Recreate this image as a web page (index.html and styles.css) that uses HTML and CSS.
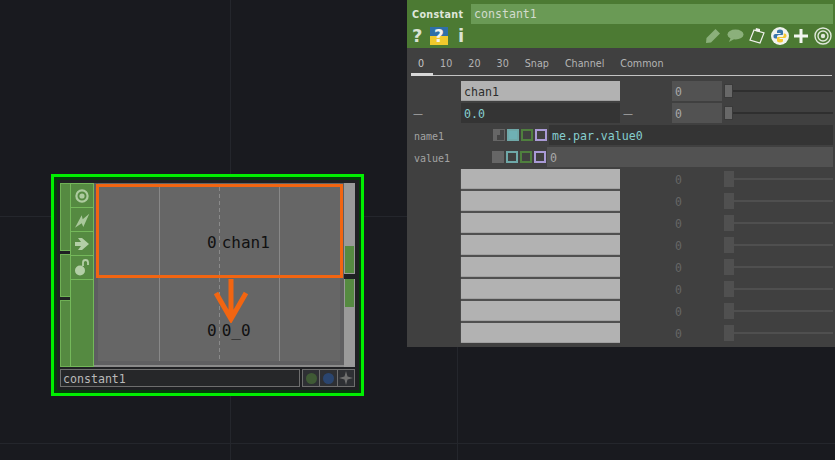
FILE: index.html
```html
<!DOCTYPE html>
<html lang="en">
<head>
<meta charset="utf-8">
<title>Constant CHOP</title>
<link rel="stylesheet" href="styles.css">
</head>
<body>
<main class="canvas">
  <div class="gridline v g1"></div>
  <div class="gridline v g2"></div>
  <div class="gridline h g3"></div>
  <div class="gridline h g4"></div>

  <section class="node">
    <div class="node-inner">
      <div class="node-main">
        <div class="inputs">
          <div class="strip s1"></div>
          <div class="strip s2"></div>
          <div class="strip s3"></div>
        </div>
        <div class="buttons">
          <div class="nbtn"><svg width="16" height="16" viewBox="0 0 16 16"><circle cx="8" cy="8" r="5.6" fill="none" stroke="#adcb9f" stroke-width="2.2"/><circle cx="8" cy="8" r="2.6" fill="#adcb9f"/></svg></div>
          <div class="nbtn"><svg width="18" height="18" viewBox="0 0 18 18"><path d="M16.3 2.7 L9.7 8.3 L8.7 4.3 L2 16.7 L8.7 12.3 L10.3 16 Z" fill="#a9c89b"/></svg></div>
          <div class="nbtn"><svg width="16" height="16" viewBox="0 0 16 16"><path d="M1 6 H7 L4 2 H8 L15 8 L8 14 H4 L7 10 H1 Z" fill="#b3cfa6"/></svg></div>
          <div class="nbtn"><svg width="16" height="18" viewBox="0 0 16 18"><circle cx="6" cy="11.5" r="5" fill="#b3cfa6"/><path d="M9 7 V3.5 A2.4 2.4 0 0 1 14 3.5 V6" fill="none" stroke="#b3cfa6" stroke-width="1.8"/></svg></div>
          <div class="nbtn-rest"></div>
        </div>
        <div class="viewer">
          <div class="vline l1"></div>
          <div class="vline l2"></div>
          <div class="vline l3"></div>
          <div class="chan chan-a"><span class="val">0</span><span>chan1</span></div>
          <div class="chan chan-b"><span class="val">0</span><span>0_0</span></div>
        </div>
        <div class="scrolls">
          <div class="scroll sc1"><div class="thumb"></div></div>
          <div class="scroll sc2"><div class="thumb"></div></div>
        </div>
      </div>
      <div class="node-bar">
        <div class="node-name">constant1</div>
        <div class="node-flags">
          <div class="flag"><span class="dot d-green"></span></div>
          <div class="flag"><span class="dot d-blue"></span></div>
          <div class="flag"><svg width="16" height="16" viewBox="0 0 16 16"><path d="M8 1 L9.5 6.5 L15 8 L9.5 9.5 L8 15 L6.5 9.5 L1 8 L6.5 6.5 Z" fill="#6f6f6f"/></svg></div>
        </div>
      </div>
    </div>
  </section>

  <div class="callout"></div>
  <svg class="arrow" width="36" height="44" viewBox="0 0 36 44"><path d="M18 0 V38 M3 14 L18 40 L33 14" fill="none" stroke="#f26511" stroke-width="5"/></svg>

  <section class="panel">
    <header class="phead">
      <div class="ptitle">
        <span class="ptype">Constant</span>
        <span class="pname">constant1</span>
      </div>
      <div class="ptools">
        <span class="glyph g-q">?</span>
        <span class="pyhelp">?</span>
        <span class="glyph g-i">i</span>
        <span class="spacer"></span>
        <svg class="t-pen" width="16" height="16" viewBox="0 0 16 16"><path d="M1 15 L1.5 10 L10.5 1 L15 5.5 L6 14.5 Z" fill="#8bb07b"/></svg>
        <svg class="t-com" width="18" height="14" viewBox="0 0 18 14"><ellipse cx="9.5" cy="5.5" rx="8" ry="5" fill="#8bb07b"/><path d="M5 8 L3 13 L10 9 Z" fill="#8bb07b"/></svg>
        <svg class="t-clip" width="18" height="18" viewBox="0 0 18 18"><path d="M6 3 L16 6 L12 16 L2 13 Z" fill="none" stroke="#f2f2ee" stroke-width="1.2"/><path d="M8 1 L12 2 L12 5 L7 4 Z" fill="#f2f2ee"/></svg>
        <svg class="t-py" width="18" height="18" viewBox="0 0 18 18"><circle cx="9" cy="9" r="9" fill="#f1f3ee"/><path d="M9 2.5 C6.5 2.5 6 3.5 6 4.5 V6 H9.5 V7 H4.5 C3 7 2.5 8 2.5 9.2 C2.5 10.5 3 11.5 4.5 11.5 H6 V9.8 C6 8.8 6.8 8 7.8 8 H11 C11.6 8 12 7.5 12 7 V4.5 C12 3.2 10.8 2.5 9 2.5 Z" fill="#3a76ab"/><path d="M9 15.5 C11.5 15.5 12 14.5 12 13.5 V12 H8.5 V11 H13.5 C15 11 15.5 10 15.5 8.8 C15.5 7.5 15 6.5 13.5 6.5 H12.7 V8.2 C12.7 9.2 12 10 11 10 H7 C6.4 10 6 10.5 6 11 V13.5 C6 14.8 7.2 15.5 9 15.5 Z" fill="#f4c832"/></svg>
        <svg class="t-plus" width="14" height="14" viewBox="0 0 14 14"><path d="M7 0 V14 M0 7 H14" stroke="#f2f5ef" stroke-width="3"/></svg>
        <svg class="t-tgt" width="18" height="18" viewBox="0 0 18 18"><circle cx="9" cy="9" r="8" fill="none" stroke="#dfe8da" stroke-width="1.4"/><circle cx="9" cy="9" r="5" fill="none" stroke="#dfe8da" stroke-width="1.4"/><circle cx="9" cy="9" r="2.2" fill="#dfe8da"/></svg>
      </div>
    </header>
    <nav class="tabs">
      <span class="tab active">0</span>
      <span class="tab">10</span>
      <span class="tab">20</span>
      <span class="tab">30</span>
      <span class="tab">Snap</span>
      <span class="tab">Channel</span>
      <span class="tab">Common</span>
    </nav>
    <div class="pbody">
      <div class="row">
        <span></span>
        <div class="txt">chan1</div>
        <span></span>
        <div class="num">0</div>
        <div class="slider"><i></i></div>
      </div>
      <div class="row">
        <span class="dash">—</span>
        <div class="txt dark">0.0</div>
        <span class="dash d2">—</span>
        <div class="num">0</div>
        <div class="slider"><i></i></div>
      </div>
      <div class="prow">
        <span class="plabel">name1</span>
        <div class="swatches">
          <span class="sw sw-mode"></span><span class="sw sw-teal on"></span><span class="sw sw-green"></span><span class="sw sw-lilac"></span>
        </div>
        <div class="expr">me.par.value0</div>
      </div>
      <div class="prow second">
        <span class="plabel">value1</span>
        <div class="swatches">
          <span class="sw sw-solid"></span><span class="sw sw-teal"></span><span class="sw sw-green"></span><span class="sw sw-lilac"></span>
        </div>
        <div class="expr const">0</div>
      </div>
      <div class="row off"><span></span><div class="txt"></div><span></span><div class="num">0</div><div class="slider"><i></i></div></div>
      <div class="row off"><span></span><div class="txt"></div><span></span><div class="num">0</div><div class="slider"><i></i></div></div>
      <div class="row off"><span></span><div class="txt"></div><span></span><div class="num">0</div><div class="slider"><i></i></div></div>
      <div class="row off"><span></span><div class="txt"></div><span></span><div class="num">0</div><div class="slider"><i></i></div></div>
      <div class="row off"><span></span><div class="txt"></div><span></span><div class="num">0</div><div class="slider"><i></i></div></div>
      <div class="row off"><span></span><div class="txt"></div><span></span><div class="num">0</div><div class="slider"><i></i></div></div>
      <div class="row off"><span></span><div class="txt"></div><span></span><div class="num">0</div><div class="slider"><i></i></div></div>
      <div class="row off"><span></span><div class="txt"></div><span></span><div class="num">0</div><div class="slider"><i></i></div></div>
    </div>
  </section>
</main>
</body>
</html>
```
FILE: styles.css
```css
* { box-sizing: border-box; }
html, body { margin: 0; height: 100%; background: #191a1f; overflow: hidden; }
.canvas { position: relative; width: 835px; height: 460px; overflow: hidden; background: #191a1f; font-family: "DejaVu Sans Mono", monospace; }

.gridline { position: absolute; background: #24262c; }
.gridline.v { top: 0; bottom: 0; width: 1px; }
.gridline.h { left: 0; right: 0; height: 1px; }
.g1 { left: 230px; }
.g2 { left: 457px; }
.g3 { top: 216px; }
.g4 { top: 443px; }

/* Node */
.node { position: absolute; left: 51px; top: 174px; width: 313px; height: 222px; border: 3px solid #00f000; background: #053d0a; padding: 3px 2px 3px 3px; }
.node-inner { height: 100%; background: #1f2023; padding: 3px 4px 3px 3px; display: flex; flex-direction: column; }
.node-main { display: flex; height: 185px; }
.inputs { width: 10px; display: flex; flex-direction: column; gap: 3px; }
.strip { background: #558a41; border: 1px solid #6fb055; border-right-width: 0; }
.s1 { height: 68px; }
.s2 { height: 43px; }
.s3 { flex: 1; }
.buttons { width: 24px; display: flex; flex-direction: column; background: #558a41; border: 1px solid #74b85a; }
.nbtn { height: 24px; display: flex; align-items: center; justify-content: center; border-bottom: 1px solid #74b85a; }
.nbtn-rest { flex: 1; }
.viewer { position: relative; width: 250px; background: #666; border-bottom: 2px solid #8a8a8a; box-shadow: inset 4px 0 0 #5d5d60, inset -4px 0 0 #5f5f61, inset 0 -4px 0 #5f5f61; color: #111; font-size: 16px; }
.vline { position: absolute; top: 4px; bottom: 4px; width: 1px; background: #888; }
.l1 { left: 65px; }
.l2 { left: 125px; background: repeating-linear-gradient(#8a8a8a 0 4px, transparent 4px 7px); }
.l3 { left: 185px; }
.chan { position: absolute; display: flex; gap: 5px; line-height: 18px; }
.chan-a { left: 113px; top: 51px; }
.chan-b { left: 113px; top: 139px; }
.scrolls { width: 11px; display: flex; flex-direction: column; gap: 5px; }
.scroll { background: #9a9a9a; }
.sc1 { height: 91px; padding: 63px 1px 0; }
.sc2 { flex: 1; padding: 0 1px; }
.thumb { height: 27px; background: #558a41; }
.sc2 .thumb { height: 28px; }
.node-bar { display: flex; gap: 2px; margin-top: 2px; height: 18px; }
.node-name { width: 240px; height: 18px; border: 1px solid #6e6e6e; background: #262729; color: #b9b9b9; font-size: 11.6px; line-height: 18px; padding-left: 2px; }
.node-flags { display: flex; flex: 1; border: 1px solid #6e6e6e; height: 18px; }
.flag { flex: 1; display: flex; align-items: center; justify-content: center; border-right: 1px solid #6e6e6e; background: #2e3034; }
.flag:last-child { border-right: 0; }
.dot { width: 11px; height: 11px; border-radius: 50%; }
.d-green { background: #3f5a35; }
.d-blue { background: #2a456f; }

.callout { position: absolute; left: 96px; top: 184px; width: 247px; height: 94px; border: 3px solid #f26511; }
.arrow { position: absolute; left: 213px; top: 279px; }

/* Panel */
.panel { position: absolute; left: 407px; top: 0; width: 428px; height: 347px; background: #404040; display: flex; flex-direction: column; color: #b8b8b8; font-family: "DejaVu Sans Mono", monospace; }
.phead { height: 48px; background: #4c7a33; padding: 4px 2px 0 0; }
.ptitle { display: flex; align-items: center; height: 20px; }
.ptype { width: 64px; padding-left: 5px; font: bold 9.6px "DejaVu Sans", sans-serif; letter-spacing: 0.35px; color: #dfe6da; }
.pname { flex: 1; height: 20px; background: #6a9a55; color: #d2dccd; font-size: 11.6px; line-height: 20px; padding-left: 3px; }
.ptools { display: flex; align-items: center; height: 24px; position: relative; }
.glyph { font: bold 18px "DejaVu Sans", sans-serif; color: #d9e2d3; line-height: 24px; }
.g-q { margin-left: 5px; width: 13px; }
.g-i { margin-left: 10px; width: 8px; }
.pyhelp { margin-left: 5px; width: 18px; height: 18px; background: linear-gradient(#2f6fa8 0 50%, #f0c92c 50%); color: #f2f2ee; font: bold 17px/18px "DejaVu Sans", sans-serif; text-align: center; }
.spacer { flex: 1; }
.t-pen { margin-right: 5px; }
.t-com { margin-right: 4px; }
.t-clip { margin-right: 5px; }
.t-py { margin-right: 5px; }
.t-plus { margin-right: 6px; }
.t-tgt { margin-right: 1px; }

.tabs { height: 28px; margin: 0 3px 0 4px; padding-top: 9px; display: flex; gap: 16px; border-bottom: 1px solid #c4c4c4; font: 9.6px "DejaVu Sans", sans-serif; color: #b4b4b4; position: relative; }
.tab { line-height: 14px; }
.tab:first-child { margin-left: 7px; }
.tab.active { color: #c8c8c8; }
.tab.active::after { content: ""; position: absolute; left: 0; bottom: -1px; width: 22px; height: 3px; background: #d8d8d8; }

.pbody { padding-top: 5px; display: flex; flex-direction: column; gap: 2px; }
.row { display: grid; grid-template-columns: 54px 159px 52px 50px 111px; height: 20px; align-items: center; }
.txt { height: 20px; background: #b2b2b2; border-bottom: 1px solid #a0a0a0; color: #2c2c2c; font-size: 11.6px; line-height: 22px; padding-left: 3px; }
.txt.dark { background: #343434; border: 0; color: #86cfcf; }
.num { height: 20px; background: #525252; color: #a8a8a8; font-size: 11.5px; line-height: 22px; padding-left: 3px; }
.dash { padding-left: 6px; color: #aaa; font: 10px "DejaVu Sans", sans-serif; }
.d2 { padding-left: 3px; }
.slider { position: relative; height: 20px; margin-left: 2px; }
.slider::before { content: ""; position: absolute; left: 0; right: 0; top: 9px; height: 2px; background: #2f2f2f; }
.slider i { position: absolute; left: 0; top: 3px; width: 9px; height: 14px; background: #686868; border: 1px solid #3a3a3a; }
.prow { display: flex; align-items: center; height: 20px; }
.plabel { width: 86px; padding: 2px 0 0 7px; font-size: 10px; color: #a3a3a3; }
.swatches { display: flex; gap: 2px; width: 56px; }
.sw { width: 12px; height: 12px; border: 2px solid #666; display: block; }
.sw-mode { border-width: 1px; background: linear-gradient(#666, #666) top left / 60% 50% no-repeat, linear-gradient(#666, #666) top left / 30% 100% no-repeat, #444; }
.sw-solid { background: #666; }
.sw-teal { border-color: #6fa8a8; }
.sw-teal.on { background: #6fb0b4; }
.sw-green { border-color: #4f7f3e; }
.sw-lilac { border-color: #a99ad6; }
.expr { flex: 1; height: 20px; margin-right: 2px; background: #343434; color: #86cfcf; font-size: 11.6px; line-height: 22px; padding-left: 3px; }
.expr.const { background: #525252; color: #a8a8a8; margin-left: -1px; }
.second .swatches { margin-left: -1px; }
.row.off .txt { box-shadow: 0 2px 0 #505050, -1px 0 0 #4a4a4a; }
.row.off:last-child .txt { box-shadow: -1px 0 0 #4a4a4a; }
.row.off .num { background: transparent; color: #666; }
.row.off .slider i { background: #505050; border: 0; top: 2px; width: 10px; height: 16px; }
.row.off .slider::before { background: #4f4f4f; }
```
